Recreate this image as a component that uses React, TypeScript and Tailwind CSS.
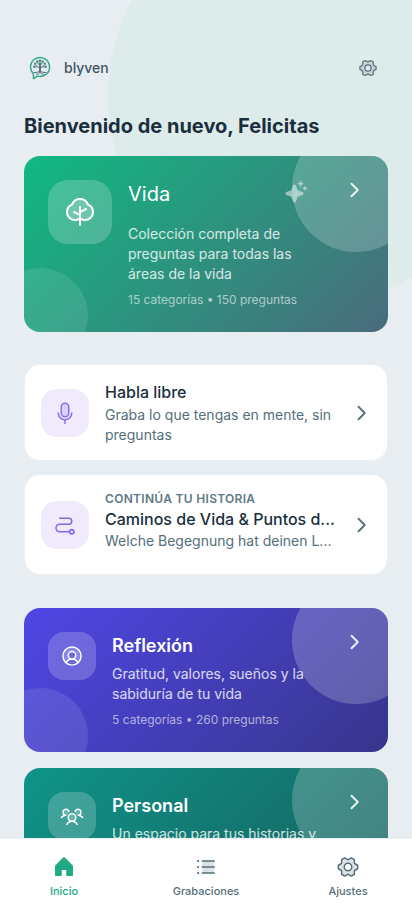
import type { ReactNode } from "react";
import {
  PiCaretRightBold,
  PiGearSixDuotone,
  PiHouseFill,
  PiListBulletsDuotone,
  PiMicrophoneDuotone,
  PiPathDuotone,
  PiSparkleFill,
  PiTreeDuotone,
  PiUserCircleDuotone,
  PiUsersThreeDuotone,
} from "react-icons/pi";

function Logo() {
  return (
    <svg viewBox="0 0 24 24" className="size-6" fill="none">
      <path d="M5.300 17.700A9.500 9.500 0 1 1 9.300 20.100L5.600 22.600Z" fill="#e4eef0" stroke="#35a58b" strokeWidth="1.5" strokeLinejoin="round" />
      <g stroke="#536b79" strokeLinecap="round">
        <path d="M12 16V8" strokeWidth="1.8" />
        <path d="M12 12.500L8.200 9.500M12 12.500l3.800-3M12 10L10 7M12 10l2-3M9.500 10.800H7M14.500 10.800H17" strokeWidth="0.9" />
        <path d="M12 14.500c-.4 1.600-2.400 2-5.800 2M12 14.500c.4 1.600 2.400 2 5.800 2M8.500 18.200c1.800 0 2.600-.6 3.500-1.700.9 1.100 1.700 1.700 3.500 1.700" strokeWidth="1" />
      </g>
      <g fill="#4d8c86">
        <circle cx="12" cy="4.800" r="1.300" />
        <circle cx="9.300" cy="5.600" r="1.300" />
        <circle cx="14.700" cy="5.600" r="1.300" />
        <circle cx="7.200" cy="7.800" r="1.300" />
        <circle cx="16.800" cy="7.800" r="1.300" />
        <circle cx="6.200" cy="10.700" r="1.200" />
        <circle cx="17.800" cy="10.700" r="1.200" />
        <circle cx="12" cy="7.500" r="1.200" />
      </g>
    </svg>
  );
}

function Bubbles() {
  return (
    <>
      <div className="absolute -right-8 -top-8 size-32 rounded-full bg-white/20" />
      <div className="absolute -bottom-8 -left-8 size-24 rounded-full bg-white/10" />
    </>
  );
}

function CategoryCard({ tone, icon, title, text, meta }: { tone: string; icon: ReactNode; title: string; text: string; meta?: string }) {
  return (
    <section className={`relative flex h-36 shrink-0 gap-4 overflow-hidden rounded-2xl p-6 text-white ${tone}`}>
      <Bubbles />
      <div className="relative flex size-12 shrink-0 items-center justify-center rounded-2xl bg-white/20">{icon}</div>
      <div className="relative w-[212px]">
        <h2 className="text-lg font-semibold leading-7">{title}</h2>
        <p className="mt-1 text-sm leading-5 text-white/80">{text}</p>
        {meta && <p className="mt-2 whitespace-nowrap text-xs leading-4 text-white/60">{meta}</p>}
      </div>
      <PiCaretRightBold className="absolute right-6 top-6 size-5 text-white/90" />
    </section>
  );
}

function TabItem({ icon, label, active }: { icon: ReactNode; label: string; active?: boolean }) {
  return (
    <div className={`flex w-20 flex-col items-center gap-1 pt-4 ${active ? "text-[#22ab82]" : "text-[#546e7a]"}`}>
      {icon}
      <span className="text-[11px] font-medium leading-4">{label}</span>
    </div>
  );
}

export default function App() {
  return (
    <div className="relative flex h-[915px] w-[412px] flex-col overflow-hidden bg-[#e8edf1] font-[Inter,sans-serif] text-[#1a2f3d]">
      <div className="absolute left-[108px] top-[-110px] size-[412px] rounded-full bg-[#deebeb]" />
      <main className="relative flex min-h-0 flex-1 flex-col overflow-hidden px-6">
        <header className="mt-12 flex h-10 shrink-0 items-center pl-1 pr-2.5">
          <Logo />
          <span className="ml-3 text-sm font-medium text-[#405664]">blyven</span>
          <PiGearSixDuotone className="ml-auto size-5 text-[#5b7180]" />
        </header>
        <h1 className="mt-6 shrink-0 text-xl font-bold leading-7">Bienvenido de nuevo, Felicitas</h1>

        <section className="relative mt-4 flex h-[175.5px] shrink-0 gap-4 overflow-hidden rounded-2xl bg-[linear-gradient(135deg,#10b981,#4a6b7c)] p-6 text-white">
          <Bubbles />
          <div className="relative flex size-16 shrink-0 items-center justify-center rounded-[20px] bg-white/20">
            <PiTreeDuotone className="size-8" />
          </div>
          <div className="relative w-[188px]">
            <h2 className="text-xl font-normal leading-7">Vida</h2>
            <p className="mt-4 text-sm leading-5 text-white/80">Colección completa de preguntas para todas las áreas de la vida</p>
            <p className="mt-2 whitespace-nowrap text-xs leading-4 text-white/60">15 categorías • 150 preguntas</p>
          </div>
          <PiSparkleFill className="absolute left-[260px] top-6 size-6 text-white/50" />
          <PiCaretRightBold className="absolute right-6 top-6 size-5 text-white/90" />
        </section>

        <section className="mt-[32.5px] flex h-[97px] shrink-0 items-center rounded-2xl border border-[#edf0f3] bg-white px-4">
          <div className="flex size-12 shrink-0 items-center justify-center rounded-2xl bg-[#f1eafd]">
            <PiMicrophoneDuotone className="size-6 text-[#8b6ff0]" />
          </div>
          <div className="ml-4 flex-1 pb-px">
            <h2 className="text-base font-medium leading-6">Habla libre</h2>
            <p className="mt-px text-sm leading-5 text-[#546e7a]">Graba lo que tengas en mente, sin preguntas</p>
          </div>
          <PiCaretRightBold className="size-5 shrink-0 text-[#546e7a]" />
        </section>

        <section className="mt-[13px] flex h-[101px] shrink-0 items-center rounded-2xl border border-[#edf0f3] bg-white px-4">
          <div className="flex size-12 shrink-0 items-center justify-center rounded-2xl bg-[#f1eafd]">
            <PiPathDuotone className="size-6 text-[#8068df]" />
          </div>
          <div className="ml-4 min-w-0 flex-1 pb-2">
            <p className="text-xs font-semibold leading-4 tracking-[0.025em] text-[#607885]">CONTINÚA TU HISTORIA</p>
            <h2 className="whitespace-nowrap text-base font-medium leading-6">Caminos de Vida &amp; Puntos d...</h2>
            <p className="whitespace-nowrap text-sm leading-5 text-[#546e7a]">Welche Begegnung hat deinen L...</p>
          </div>
          <PiCaretRightBold className="size-5 shrink-0 text-[#546e7a]" />
        </section>

        <div className="mt-[32.5px] flex flex-col gap-4">
          <CategoryCard
            tone="bg-[linear-gradient(135deg,#4f46e5,#37368c)]"
            icon={<PiUserCircleDuotone className="size-6" />}
            title="Reflexión"
            text="Gratitud, valores, sueños y la sabiduría de tu vida"
            meta="5 categorías • 260 preguntas"
          />
          <CategoryCard
            tone="bg-[linear-gradient(135deg,#0f9488,#175e5d)]"
            icon={<PiUsersThreeDuotone className="size-6" />}
            title="Personal"
            text="Un espacio para tus historias y"
          />
        </div>
      </main>
      <nav className="relative flex h-[77px] shrink-0 justify-between border-t border-[#edf1f3] bg-white px-6">
        <TabItem active icon={<PiHouseFill className="size-6" />} label="Inicio" />
        <TabItem icon={<PiListBulletsDuotone className="size-6" />} label="Grabaciones" />
        <TabItem icon={<PiGearSixDuotone className="size-6" />} label="Ajustes" />
      </nav>
    </div>
  );
}
